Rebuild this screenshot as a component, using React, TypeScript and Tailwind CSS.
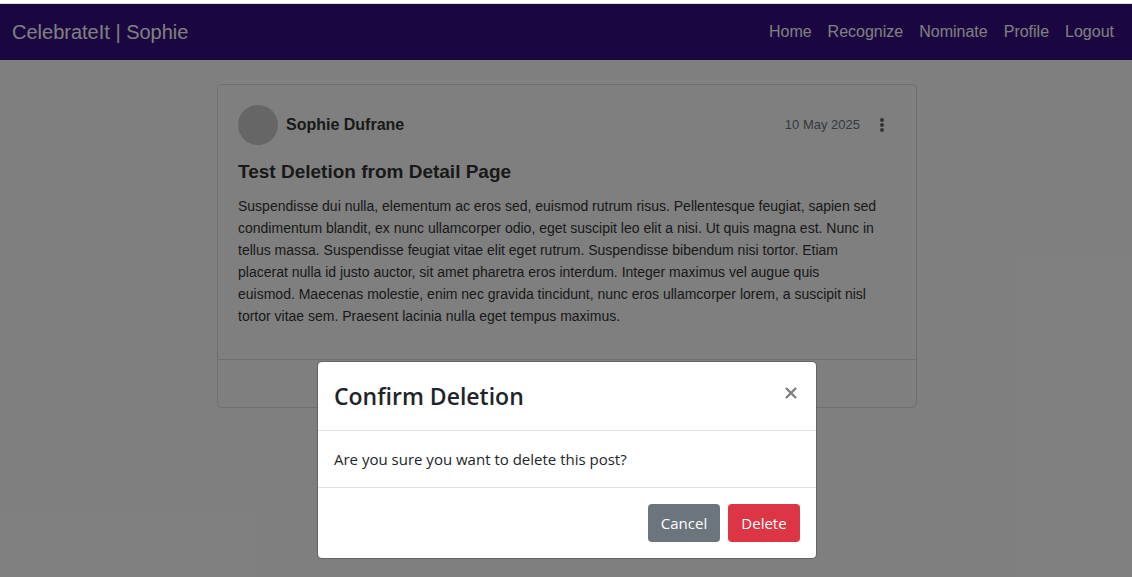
import React from "react";

const links = ["Home", "Recognize", "Nominate", "Profile", "Logout"];

function Navbar() {
  return (
    <nav className="flex h-14 items-center justify-between bg-[#340c80] pr-[18px] pl-3 text-white">
      <a href="#home" className="text-xl">
        CelebrateIt | Sophie
      </a>
      <ul className="flex gap-4">
        {links.map((name) => (
          <li key={name}>
            <a href={`#${name.toLowerCase()}`}>{name}</a>
          </li>
        ))}
      </ul>
    </nav>
  );
}

function PostCard() {
  return (
    <article className="mx-auto mt-6 w-full max-w-[700px] rounded-[5px] border border-[#dfdfdf] text-[#333]">
      <div className="px-5 pt-5 pb-8">
        <header className="flex items-center">
          <span className="size-10 rounded-full bg-[#ccc]" />
          <span className="ml-2 flex-1 font-bold">Sophie Dufrane</span>
          <time dateTime="2025-05-10" className="text-[13px] text-[#6c757d]">
            10 May 2025
          </time>
          <button type="button" aria-label="Post options" className="mr-1 ml-3 flex w-5 justify-center">
            <svg width="6" height="14" viewBox="0 0 6 14" fill="#666">
              <circle cx="3" cy="2" r="2" />
              <circle cx="3" cy="7" r="2" />
              <circle cx="3" cy="12" r="2" />
            </svg>
          </button>
        </header>
        <h1 className="mt-3 text-[19px] leading-[30px] font-bold">Test Deletion from Detail Page</h1>
        <p className="mt-2 pr-[18px] text-sm leading-[22px]">
          Suspendisse dui nulla, elementum ac eros sed, euismod rutrum risus. Pellentesque feugiat,
          sapien sed condimentum blandit, ex nunc ullamcorper odio, eget suscipit leo elit a nisi.
          Ut quis magna est. Nunc in tellus massa. Suspendisse feugiat vitae elit eget rutrum.
          Suspendisse bibendum nisi tortor. Etiam placerat nulla id justo auctor, sit amet pharetra
          eros interdum. Integer maximus vel augue quis euismod. Maecenas molestie, enim nec gravida
          tincidunt, nunc eros ullamcorper lorem, a suscipit nisl tortor vitae sem. Praesent lacinia
          nulla eget tempus maximus.
        </p>
      </div>
      <footer className="h-12 border-t border-[#dfdfdf]" />
    </article>
  );
}

function ConfirmDialog() {
  return (
    <div className="absolute inset-0 bg-black/50 pt-[357px] pl-0.5">
      <div
        role="dialog"
        aria-modal="true"
        aria-labelledby="confirm-title"
        className="mx-auto w-full max-w-[500px] rounded-[5px] border border-black/20 bg-white bg-clip-padding font-['Open_Sans','Noto_Sans',sans-serif] text-[15px] text-[#212529]"
      >
        <div className="flex items-start justify-between border-b border-[#dee2e6] py-4 pr-2.5 pl-4">
          <h2 id="confirm-title" className="text-[23px] leading-9 font-semibold">
            Confirm Deletion
          </h2>
          <button type="button" aria-label="Close" className="flex size-[30px] items-center justify-center">
            <svg width="12" height="12" viewBox="0 0 12 12" stroke="#7f7f7f" strokeWidth="2.4">
              <path d="M1 1 11 11M11 1 1 11" />
            </svg>
          </button>
        </div>
        <p className="border-b border-[#dee2e6] p-4 leading-6">
          Are you sure you want to delete this post?
        </p>
        <div className="flex justify-end gap-2 p-4 text-white">
          <button type="button" className="h-[38px] w-[72px] rounded bg-[#6c757d]">
            Cancel
          </button>
          <button type="button" className="h-[38px] w-[72px] rounded bg-[#dc3545]">
            Delete
          </button>
        </div>
      </div>
    </div>
  );
}

export default function App() {
  return (
    <div className="flex min-h-screen flex-col bg-white font-['Liberation_Sans',Arial,sans-serif] text-base">
      <div className="h-1 border-b border-[#dfdfdf]" />
      <div className="relative flex-1 pb-6">
        <Navbar />
        <main className="pl-0.5">
          <PostCard />
        </main>
        <ConfirmDialog />
      </div>
    </div>
  );
}
